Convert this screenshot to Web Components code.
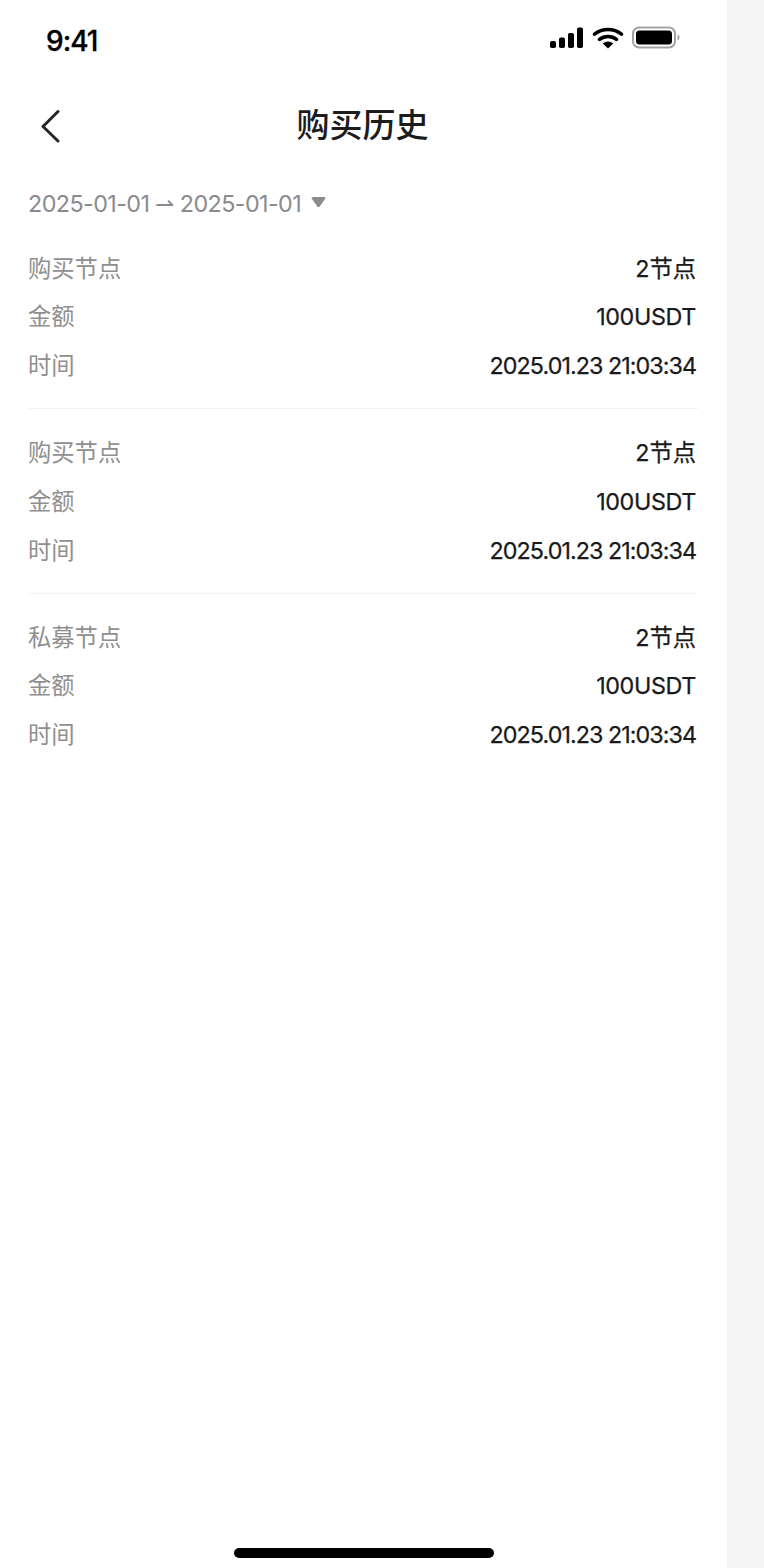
<!DOCTYPE html>
<html lang="zh">
<head>
<meta charset="utf-8">
<style>
  html, body { margin: 0; padding: 0; background: #f5f5f5; }
  body { font-family: Inter, "Noto Sans CJK SC", sans-serif; }
</style>
</head>
<body>
<phone-page>
  <status-bar></status-bar>
  <nav-bar>购买历史</nav-bar>
  <date-filter>2025-01-01 ⇀ 2025-01-01</date-filter>
  <purchase-record kind="购买节点" nodes="2节点" amount="100USDT" time="2025.01.23 21:03:34"></purchase-record>
  <purchase-record kind="购买节点" nodes="2节点" amount="100USDT" time="2025.01.23 21:03:34"></purchase-record>
  <purchase-record kind="私募节点" nodes="2节点" amount="100USDT" time="2025.01.23 21:03:34" last></purchase-record>
</phone-page>

<script>
class PhonePage extends HTMLElement {
    constructor() {
        super();
        this.attachShadow({ mode: 'open' }).innerHTML = `
        <style>
          :host {
            display: flex;
            flex-direction: column;
            width: 727px;
            height: 1568px;
            background: #fff;
            box-sizing: border-box;
          }
          .content { flex: 1; display: flex; flex-direction: column; }
          .homeRow { height: 39px; display: flex; justify-content: center; }
          .homeBar { width: 260px; height: 10px; margin-top: 19px; background: #000; border-radius: 5px; }
        </style>
        <div class="content"><slot></slot></div>
        <div class="homeRow"><div class="homeBar"></div></div>
      `;
    }
}

class StatusBar extends HTMLElement {
    constructor() {
        super();
        this.attachShadow({ mode: 'open' }).innerHTML = `
        <style>
          :host {
            display: flex;
            justify-content: space-between;
            height: 76px;
            padding: 0 47px 0 46px;
            box-sizing: border-box;
          }
          .time {
            font: 500 28px/82px Inter, "Liberation Sans", sans-serif;
            color: #000;
            letter-spacing: -1px;
            -webkit-text-stroke: 0.3px #000;
          }
          svg { display: block; margin-top: 26px; }
        </style>
        <span class="time">9:41</span>
        <svg width="131" height="24" viewBox="0 0 131 24">
          <rect x="1" y="15" width="6" height="7" rx="1.8" fill="#000"/>
          <rect x="10" y="11.5" width="6" height="10.5" rx="1.8" fill="#000"/>
          <rect x="19" y="7" width="6" height="15" rx="1.8" fill="#000"/>
          <rect x="28" y="1.5" width="6" height="20.5" rx="1.8" fill="#000"/>
          <path d="M45.5 8.2a22 22 0 0 1 27 0" fill="none" stroke="#000" stroke-width="3.6" stroke-linecap="round"/>
          <path d="M50.5 13.4a14 14 0 0 1 17 0" fill="none" stroke="#000" stroke-width="3.6" stroke-linecap="round"/>
          <path d="M53.8 17.6a7.5 7.5 0 0 1 10.4 0L59 22.6z" fill="#000"/>
          <rect x="84" y="1.5" width="42" height="20" rx="6" fill="none" stroke="#a3a3a3" stroke-width="2"/>
          <rect x="87" y="4.5" width="36" height="14" rx="3.5" fill="#000"/>
          <path d="M128.5 8.5c1.4.6 2 1.800 2 3s-.6 2.400-2 3z" fill="#a3a3a3"/>
        </svg>
      `;
    }
}

class NavBar extends HTMLElement {
    constructor() {
        super();
        this.attachShadow({ mode: 'open' }).innerHTML = `
        <style>
          :host {
            display: flex;
            position: relative;
            justify-content: center;
            align-items: center;
            height: 98px;
            padding: 0 2px 4px 0;
            box-sizing: border-box;
            font: 500 33px/1 "Noto Sans CJK SC", sans-serif;
            color: #1c1c1c;
          }
          svg { position: absolute; left: 39.5px; top: 33px; }
        </style>
        <svg width="22" height="34" viewBox="0 0 22 34">
          <path d="M18 2.500 3 17.500 18 32" fill="none" stroke="#262626" stroke-width="3" stroke-linecap="round" stroke-linejoin="round"/>
        </svg>
        <slot></slot>
      `;
    }
}

class DateFilter extends HTMLElement {
    constructor() {
        super();
        this.attachShadow({ mode: 'open' }).innerHTML = `
        <style>
          :host {
            display: flex;
            align-items: center;
            gap: 10px;
            height: 50.500px;
            padding: 10px 0 0.500px 28px;
            font: 400 23.300px/1 Inter, "Noto Sans CJK SC", sans-serif;
            letter-spacing: -0.57px;
            color: #8b8b8f;
            box-sizing: border-box;
          }
          svg { margin-top: -4px; }
        </style>
        <span><slot></slot></span>
        <svg width="15" height="12" viewBox="0 0 15 12">
          <path d="M1.800 1h11.400c1 0 1.500 1 1 1.800L8.500 10.800c-.5.600-1.500.6-2 0L.8 2.800C.3 2 .8 1 1.800 1z" fill="#8b8b8f"/>
        </svg>
      `;
    }
}

class PurchaseRecord extends HTMLElement {
    constructor() {
        super();
        const shadow = this.attachShadow({ mode: 'open' });
        const kind = this.getAttribute('kind') || '';
        const nodes = this.getAttribute('nodes') || '';
        const amount = this.getAttribute('amount') || '';
        const time = this.getAttribute('time') || '';
        const last = this.hasAttribute('last');

        shadow.innerHTML = `
        <style>
          :host {
            display: block;
            margin: 0 29px 0 28px;
            height: 184.500px;
            box-sizing: border-box;
            border-bottom: ${last ? '0' : '1.5px solid #f2f2f2'};
            font: 400 23.300px/1 Inter, "Noto Sans CJK SC", sans-serif;
          }
          .rows { padding: 19.600px 2px 0 0; display: grid; grid-auto-rows: 48.700px; }
          .row { display: flex; justify-content: space-between; align-items: center; }
          .label { color: #8f8f8f; }
          .value { color: #1a1a1a; -webkit-text-stroke: 0.25px #1a1a1a; }
          .amount { letter-spacing: -0.35px; }
          .time { letter-spacing: -0.95px; }
        </style>
        <div class="rows">
          <div class="row"><span class="label">${kind}</span><span class="value">${nodes}</span></div>
          <div class="row"><span class="label">金额</span><span class="value amount">${amount}</span></div>
          <div class="row"><span class="label">时间</span><span class="value time">${time}</span></div>
        </div>
      `;
    }
}

customElements.define('phone-page', PhonePage);
customElements.define('status-bar', StatusBar);
customElements.define('nav-bar', NavBar);
customElements.define('date-filter', DateFilter);
customElements.define('purchase-record', PurchaseRecord);
</script>
</body>
</html>
